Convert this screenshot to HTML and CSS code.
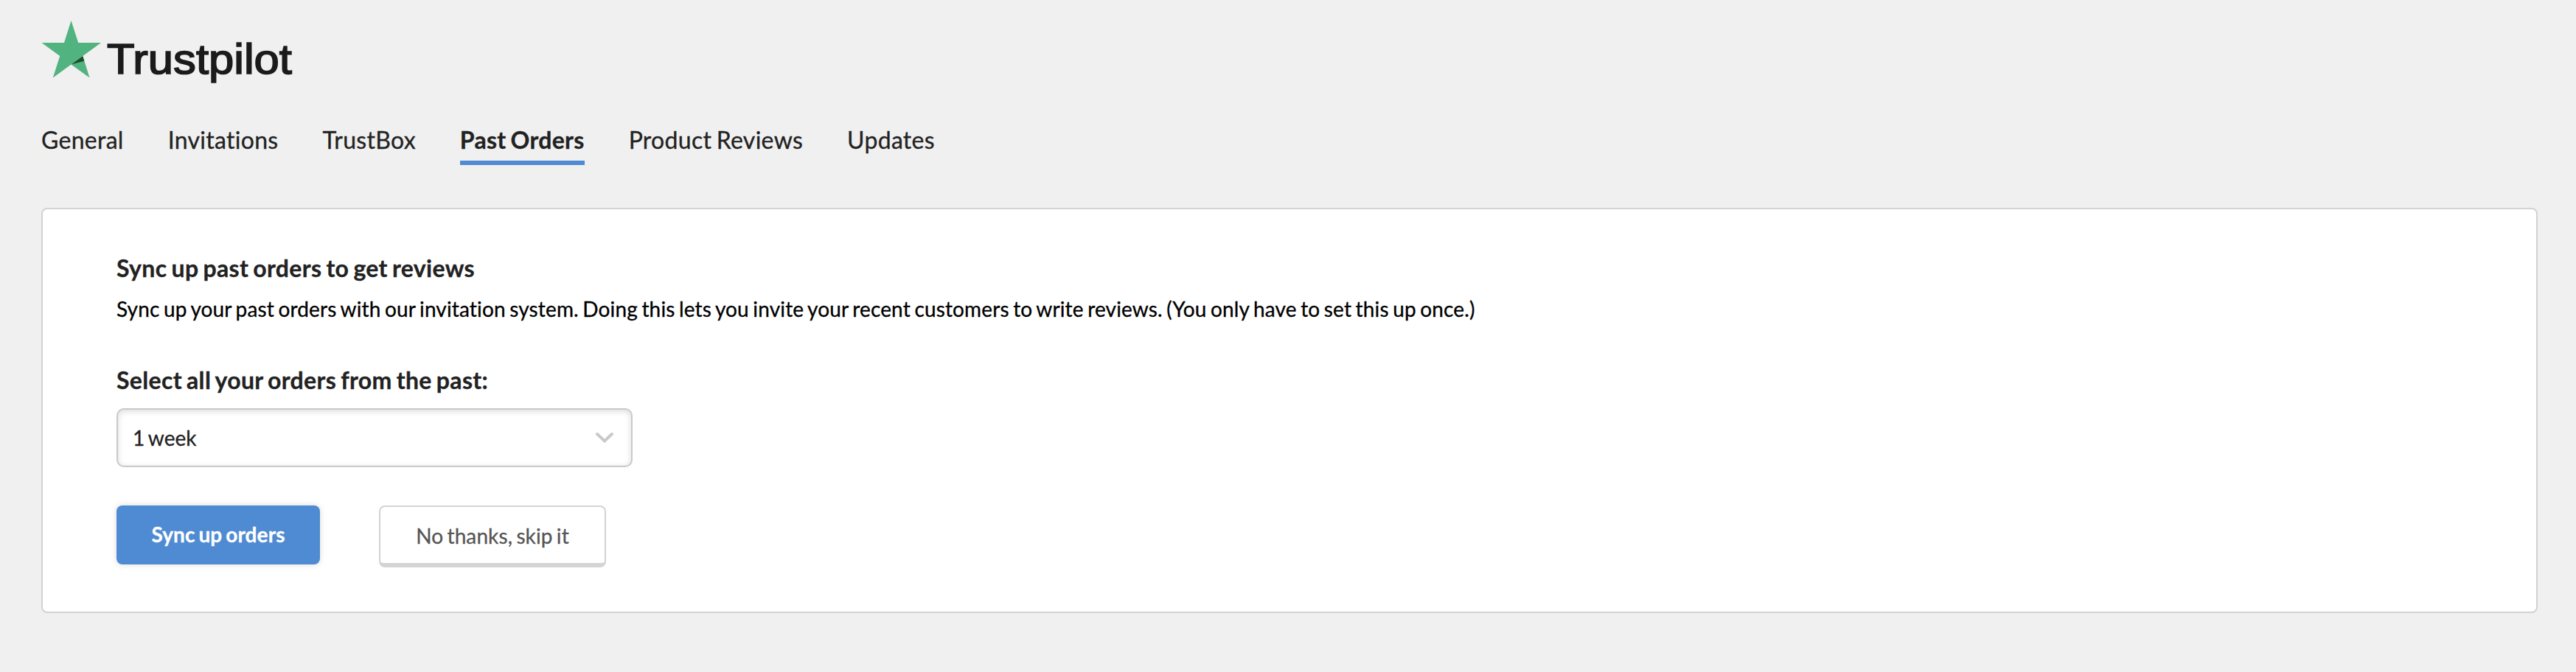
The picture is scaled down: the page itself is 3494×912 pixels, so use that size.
FILE: index.html
```html
<!DOCTYPE html>
<html lang="en">
<head>
    <meta charset="UTF-8">
    <meta name="viewport" content="width=device-width, initial-scale=1.0">
    <title>Trustpilot - Past Orders</title>
    <link rel="stylesheet" href="styles.css">
</head>
<body>
    <header>
        <svg class="logo" width="344" height="92" viewBox="0 0 344 92" role="img" aria-label="Trustpilot">
            <path fill="#51b37f" d="M40.5 0 L50.2 30 H81 L56.3 48 L65.5 77.5 L40.5 59.5 L15.8 77.5 L25.2 48 L0.5 30 H31 Z"/>
            <path fill="#1f4b2b" d="M41.2 59.3 L56.3 48.3 L58.3 54.8 Z"/>
            <text class="wordmark" x="89" y="71.5" textLength="251" lengthAdjust="spacingAndGlyphs">Trustpilot</text>
        </svg>
    </header>

    <nav class="tabs">
        <a class="tab">General</a>
        <a class="tab">Invitations</a>
        <a class="tab">TrustBox</a>
        <a class="tab active">Past Orders</a>
        <a class="tab">Product Reviews</a>
        <a class="tab">Updates</a>
    </nav>

    <main class="card">
        <h2>Sync up past orders to get reviews</h2>
        <p class="description">Sync up your past orders with our invitation system. Doing this lets you invite your recent customers to write reviews. (You only have to set this up once.)</p>

        <h2>Select all your orders from the past:</h2>
        <div class="select">
            <span>1 week</span>
            <svg width="26" height="16" viewBox="0 0 26 16">
                <path d="M3 3 L13 12.5 L23 3" fill="none" stroke="#c9c9c9" stroke-width="4" stroke-linecap="round"/>
            </svg>
        </div>

        <div class="buttons">
            <button class="primary">Sync up orders</button>
            <button class="secondary">No thanks, skip it</button>
        </div>
    </main>
</body>
</html>
```
FILE: styles.css
```css
body {
    font-family: Lato, "Liberation Sans", sans-serif;
    color: #222;
    margin: 0;
    padding: 28px 52px 0 56px;
    background-color: #f0f0f0;
    -webkit-text-stroke: 0.3px;
}
.logo {
    display: block;
}
.wordmark {
    font-family: "Liberation Sans", Arial, sans-serif;
    font-size: 58px;
    fill: #1b1b1b;
    stroke: #1b1b1b;
    stroke-width: 1.7px;
}
.tabs {
    display: flex;
    gap: 60px;
    margin-top: 50px;
}
.tab {
    font-size: 32px;
    line-height: 40px;
    height: 48px;
    letter-spacing: 0.29px;
    word-spacing: -2px;
    border-bottom: 6px solid transparent;
}
.tab.active {
    font-weight: bold;
    border-color: #4f8bd2;
}
.card {
    box-sizing: border-box;
    height: 550px;
    margin-top: 58px;
    padding: 60px 100px;
    background-color: #fff;
    border: 2px solid #d2d2d2;
    border-radius: 8px;
}
h2 {
    font-size: 32px;
    line-height: 40px;
    letter-spacing: 0.33px;
    word-spacing: -2px;
    margin: 0;
}
.description {
    font-size: 28px;
    line-height: 40px;
    letter-spacing: 0.145px;
    word-spacing: -1.8px;
    color: #000;
    margin: 15px 0 57px;
}
.select {
    display: flex;
    align-items: center;
    justify-content: space-between;
    box-sizing: border-box;
    width: 700px;
    height: 80px;
    margin-top: 18px;
    padding: 0 23px 0 20px;
    font-size: 28px;
    word-spacing: -2px;
    border: 2px solid #c9c9c9;
    border-radius: 10px;
    box-shadow: inset 0 2px 8px rgba(0, 0, 0, 0.15);
}
.buttons {
    display: flex;
    align-items: flex-start;
    gap: 80px;
    margin-top: 52px;
}
button {
    box-sizing: border-box;
    padding: 0;
    font-family: inherit;
    font-size: 28px;
    letter-spacing: 0.1px;
    word-spacing: -2px;
    border-radius: 8px;
}
button.primary {
    width: 276px;
    height: 80px;
    padding-bottom: 2px;
    font-weight: bold;
    color: #fff;
    background-color: #4f8bd2;
    border: none;
    box-shadow: 0 0 8px rgba(0, 0, 0, 0.15);
}
button.secondary {
    width: 308px;
    height: 84px;
    padding-top: 2px;
    color: #555;
    background-color: #fff;
    border: 2px solid #d4d4d4;
    border-bottom-width: 6px;
}
```
